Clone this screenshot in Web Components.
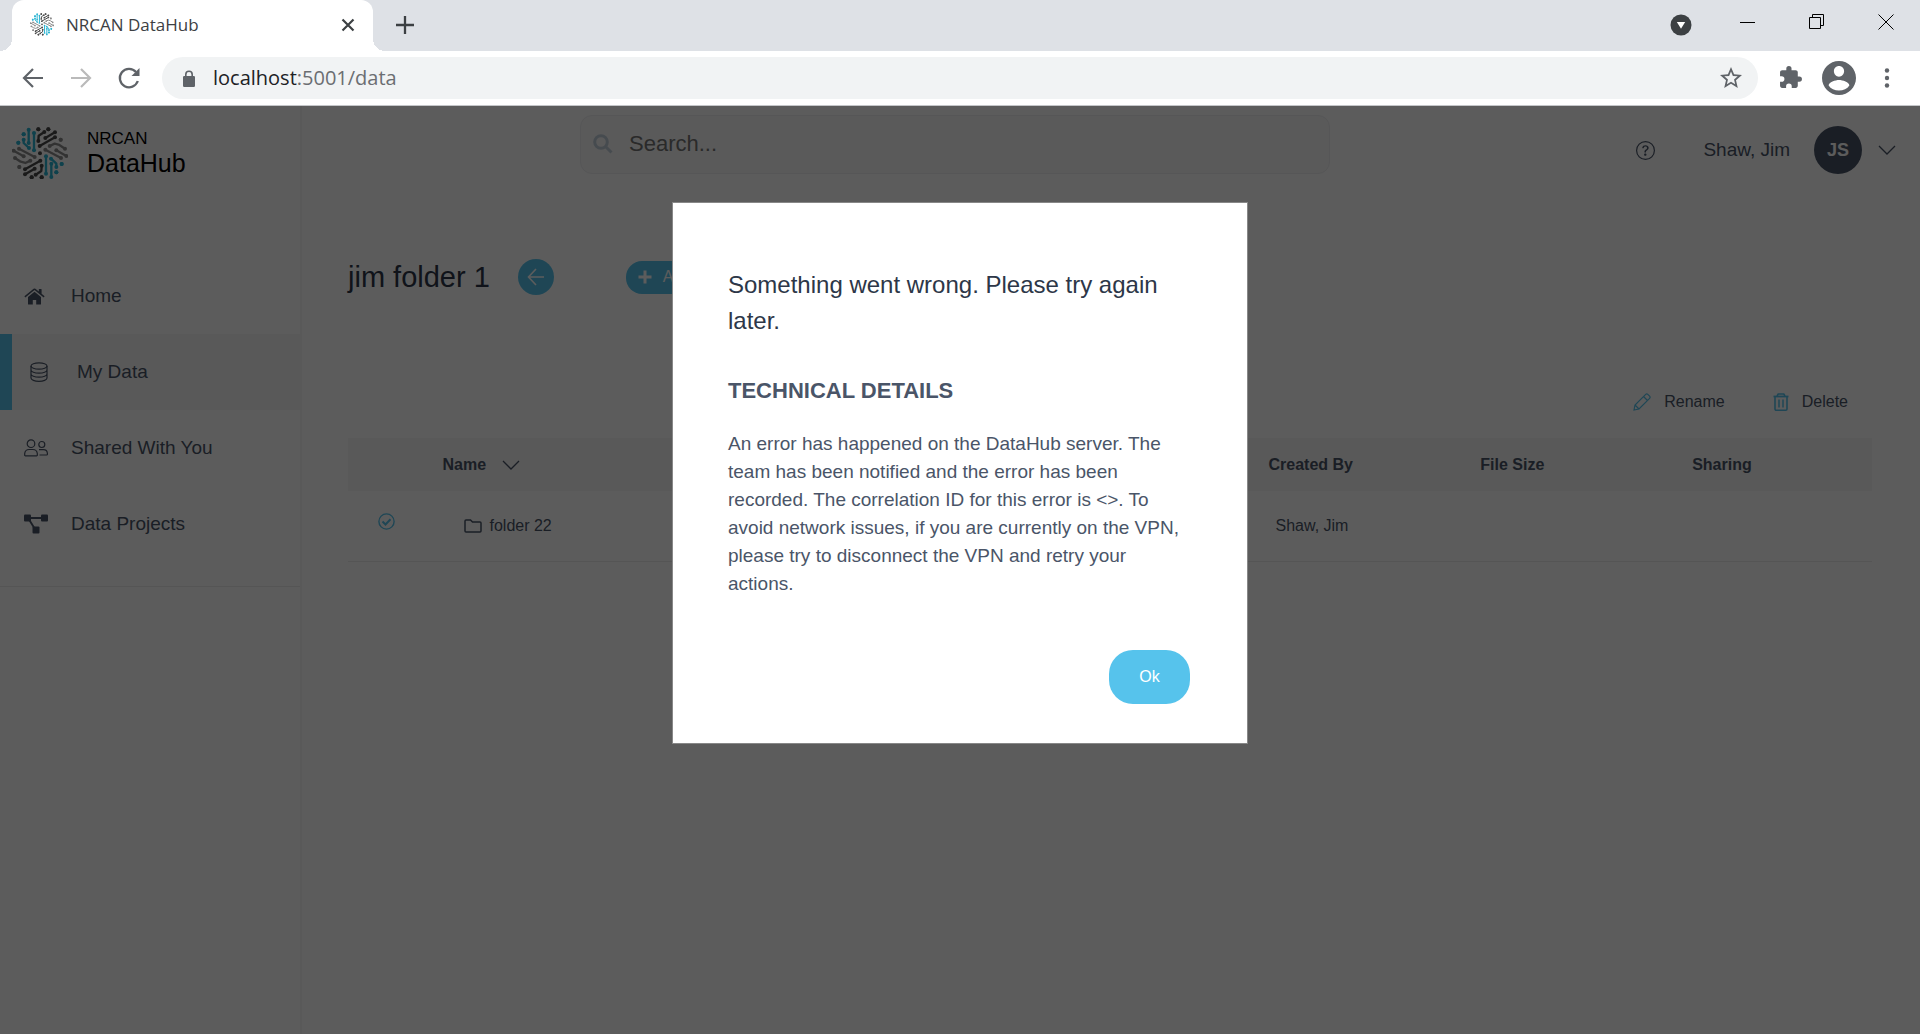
<!DOCTYPE html>
<html lang="en">
<head>
<meta charset="utf-8">
<title>NRCAN DataHub</title>
<style>
html, body { margin: 0; height: 100%; }
body { font-family: "Liberation Sans", Arial, sans-serif; background: #fff; }
browser-window { min-height: 100%; }
</style>
</head>
<body>
<browser-window>
  <tab-strip slot="tabs"></tab-strip>
  <tool-bar slot="toolbar"></tool-bar>
  <data-hub>
    <side-bar slot="side">
      <nav-item icon="home">Home</nav-item>
      <nav-item icon="database" active>My Data</nav-item>
      <nav-item icon="people">Shared With You</nav-item>
      <nav-item icon="projects">Data Projects</nav-item>
    </side-bar>
    <top-bar slot="top"></top-bar>
    <folder-view slot="main"></folder-view>
    <error-dialog slot="dialog">
      <span slot="title">Something went wrong. Please try again later.</span>
      <span slot="subtitle">TECHNICAL DETAILS</span>
      An error has happened on the DataHub server. The team has been notified and the error has been recorded. The correlation ID for this error is &lt;&gt;. To avoid network issues, if you are currently on the VPN, please try to disconnect the VPN and retry your actions.
    </error-dialog>
  </data-hub>
</browser-window>

<script>
const BASE = `
  :host, *, *::before { box-sizing: border-box; }
  button { font: inherit; color: inherit; background: none; border: 0; padding: 0; margin: 0; display: flex; align-items: center; justify-content: center; }
  svg { display: block; flex: none; }
  a { color: inherit; text-decoration: none; }
`;

function define(name, css, html) {
  customElements.define(name, class extends HTMLElement {
    constructor() {
      super();
      const body = typeof html === 'function' ? html(this) : html;
      this.attachShadow({ mode: 'open' }).innerHTML = `<style>${BASE}${css}</style>${body}`;
    }
  });
}

const line = (w, h, box, d, sw = 1, extra = '') =>
  `<svg width="${w}" height="${h}" viewBox="${box}" fill="none" stroke="currentColor" stroke-width="${sw}" aria-hidden="true" ${extra}>${d}</svg>`;
const solid = (w, h, box, d) =>
  `<svg width="${w}" height="${h}" viewBox="${box}" fill="currentColor" aria-hidden="true">${d}</svg>`;

const chevron = line(18, 18, '0 0 18 18', '<path d="M1 5l8 8 8-8"/>', 1.3);

const navIcons = {
  home: solid(21, 17, '0 0 21 17', '<path d="M10.500 3.700L4 9v7a.6.6 0 0 0 .6.600h4.200v-4.600h3.400v4.600h4.200a.6.6 0 0 0 .6-.6V9z"/><path d="M10.500.4a1.400 1.400 0 0 1 .9.300L14.800 3.500V1.400a.5.5 0 0 1 .5-.5h1.800a.5.5 0 0 1 .5.500v4.400L20.600 8.300l-.9 1.200-9.200-7.500-9.200 7.500L.4 8.300 9.600.7a1.400 1.400 0 0 1 .9-.3z"/>'),
  database: line(18, 20, '0 0 18 20', '<ellipse cx="9" cy="4" rx="8" ry="3.200"/><path d="M1 4v12c0 1.800 3.600 3.300 8 3.300s8-1.500 8-3.300V4M1 8c0 1.800 3.600 3.200 8 3.200S17 9.800 17 8M1 12c0 1.800 3.600 3.200 8 3.200s8-1.400 8-3.200"/>', 1.2),
  people: line(24, 18, '0 0 24 18', '<circle cx="7" cy="4.700" r="3.800"/><path d="M.7 16.200v-1.700a4.500 4.500 0 0 1 4.500-4h3.600a4.500 4.500 0 0 1 4.500 4v1.700a.7.700 0 0 1-.7.700H1.400a.7.700 0 0 1-.7-.7z"/><circle cx="17.800" cy="5.500" r="3"/><path d="M15 10.600h4.400a4 4 0 0 1 4 3.800v.8a.8.8 0 0 1-.8.800H15.500"/>', 1.2),
  projects: `<svg width="24" height="20" viewBox="0 0 24 20" fill="currentColor" aria-hidden="true"><rect y=".5" width="7" height="7" rx="1"/><rect x="17" y=".5" width="7" height="7" rx="1"/><rect x="8.500" y="12.500" width="7" height="7" rx="1"/><path d="M6 4h12M5 5.500l5 8" stroke="currentColor" stroke-width="1.900"/></svg>`
};

/* The circuit-board emblem: one half is drawn, the other is its half-turn. */
define('hub-logo', `
  :host { display: block; flex: none; width: var(--logo-width, 56px); }
  svg { width: 100%; height: auto; }
  .t { color: #2ab4d2; } .d { color: #4a4a4a; } .g { color: #8c8c8c; }
  path { fill: none; stroke: currentColor; stroke-width: 7; stroke-linejoin: round; }
  circle { fill: currentColor; }
`, () => {
  const groups = [
    ['t', [[84,58],[84,98]], [[100,68],[100,120]], [[69,88],[69,98],[85,113]], [[69,72]], [[53,97]]],
    ['d', [[113,92],[114,76],[131,65]], [[134,83],[163,66]], [[117,107],[163,81]], [[113,57]], [[143,57]]],
    ['g', [[193,115],[176,104],[162,100],[147,107]], [[181,143],[134,118]], [[197,137],[167,120]], [[180,88]]]
  ];
  const half = groups.map(([c, ...ps]) => `<g class="${c}">` + ps.map(p => {
    const ends = [p[0], p[p.length - 1]].map(([x, y]) => `<circle cx="${x}" cy="${y}" r="6"/>`).join('');
    return ends + (p.length > 1 ? `<path d="M${p.map(q => q.join(' ')).join('L')}"/>` : '');
  }).join('') + '</g>').join('');
  return `<svg viewBox="34 50 168 158" aria-hidden="true">${half}<g transform="rotate(180 118 129)">${half}</g><g class="d"><circle cx="118" cy="129" r="6"/></g></svg>`;
});

define('browser-window', `
  :host { display: flex; flex-direction: column; }
  ::slotted(data-hub) { flex: 1; }
`, `<slot name="tabs"></slot><slot name="toolbar"></slot><slot></slot>`);

define('tab-strip', `
  :host { display: flex; align-items: center; height: 51px; background: #dee1e6; color: #3c4043; font-family: "Open Sans", "Noto Sans", sans-serif; font-size: 17px; padding-left: 12px; }
  .tab { position: relative; align-self: stretch; display: flex; align-items: center; width: 361px; background: #fff; border-radius: 12px 12px 0 0; padding: 0 18px 2px; gap: 12px; --logo-width: 24px; }
  .tab::before { content: ""; position: absolute; bottom: 0; left: -12px; right: -12px; height: 12px; background: radial-gradient(circle at 0 0, transparent 12px, #fff 12px) left / 12px 12px no-repeat, radial-gradient(circle at 100% 0, transparent 12px, #fff 12px) right / 12px 12px no-repeat; }
  .tab span { flex: 1; }
  .new { margin-left: 23px; padding-bottom: 2px; }
  .win { margin-left: auto; display: flex; align-items: center; color: #000; }
  .win button { width: 69px; height: 40px; margin-bottom: 8px; }
  .win .menu { width: 65px; margin-bottom: 2px; color: #3c4043; }
`, `
  <div class="tab"><hub-logo></hub-logo><span>NRCAN DataHub</span>
    <button aria-label="Close tab">${line(14, 14, '0 0 14 14', '<path d="M1.500 1.500l11 11M12.500 1.500l-11 11"/>', 2.2)}</button></div>
  <button class="new" aria-label="New tab">${line(18, 18, '0 0 18 18', '<path d="M9 0v18M0 9h18"/>', 2.3)}</button>
  <div class="win">
    <button class="menu" aria-label="Search tabs"><svg width="22" height="22" viewBox="0 0 22 22" aria-hidden="true"><circle cx="11" cy="11" r="10.500" fill="#3c4043"/><path d="M6.800 8h8.400L11 14.800z" fill="#fff"/></svg></button>
    <button aria-label="Minimize">${line(16, 16, '0 0 16 16', '<path d="M0 8.500h15"/>')}</button>
    <button aria-label="Restore">${line(16, 16, '0 0 16 16', '<path d="M.5 3.500h11v11H.5zM3.500 3.500V.5h11v11h-3"/>')}</button>
    <button aria-label="Close">${line(16, 16, '0 0 16 16', '<path d="M.5.5l15 15M15.500.5l-15 15"/>')}</button>
  </div>`);

define('tool-bar', `
  :host { display: flex; align-items: center; height: 55px; padding: 0 21px 0 21px; background: #fff; border-bottom: 1px solid #c4c6c9; color: #5f6368; font-family: "Open Sans", "Noto Sans", sans-serif; }
  .nav { display: flex; gap: 24px; margin-right: 21px; }
  .off { color: #bababa; }
  .url { flex: 1; display: flex; align-items: center; height: 42px; border-radius: 21px; background: #f1f3f4; padding: 0 16px 0 21px; gap: 18px; font-size: 20px; line-height: 24px; }
  .url span { flex: 1; color: #6b6e72; }
  b { font-weight: 400; color: #202124; }
  .right { display: flex; align-items: center; gap: 19px; margin-left: 21px; }
`, `
  <div class="nav">
    <button aria-label="Back">${line(24, 24, '0 0 24 24', '<path d="M22 12H3M12 3l-9 9 9 9"/>', 2.2)}</button>
    <button class="off" aria-label="Forward">${line(24, 24, '0 0 24 24', '<path d="M2 12h19M12 3l9 9-9 9"/>', 2.2)}</button>
    <button aria-label="Reload">${line(24, 24, '0 0 24 24', '<path d="M20.800 15A9.200 9.200 0 1 1 19 6"/><path d="M22.500 2v8h-8z" fill="currentColor" stroke="none"/>', 2.300)}</button>
  </div>
  <div class="url">
    ${solid(12, 17, '0 0 12 17', '<path d="M10.800 6H10V4.500a4 4 0 0 0-8 0V6h-.8A1.200 1.200 0 0 0 0 7.200v8.600A1.200 1.200 0 0 0 1.200 17h9.600a1.200 1.200 0 0 0 1.200-1.200V7.200A1.200 1.200 0 0 0 10.800 6zM3.600 6V4.500a2.400 2.400 0 0 1 4.800 0V6z"/>')}
    <span><b>localhost</b>:5001/data</span>
    <button aria-label="Bookmark this tab">${solid(22, 22, '2 2 20 20', '<path d="M22 9.240l-7.190-.62L12 2 9.190 8.630 2 9.240l5.460 4.730L5.820 21 12 17.270 18.180 21l-1.630-7.030L22 9.240zM12 15.400l-3.760 2.270 1-4.280-3.320-2.880 4.380-.38L12 6.100l1.710 4.040 4.380.38-3.320 2.880 1 4.280L12 15.400z"/>')}</button>
  </div>
  <div class="right">
    <button aria-label="Extensions">${solid(24, 24, '1 1 23 23', '<path d="M20.500 11H19V7c0-1.100-.9-2-2-2h-4V3.500a2.500 2.500 0 0 0-5 0V5H4c-1.100 0-2 .9-2 2v3.800h1.500a2.700 2.700 0 0 1 0 5.400H2V20c0 1.100.9 2 2 2h3.800v-1.500a2.700 2.700 0 0 1 5.400 0V22H17c1.100 0 2-.9 2-2v-4h1.500a2.500 2.500 0 0 0 0-5z"/>')}</button>
    <button aria-label="Profile">${solid(34, 34, '2 2 20 20', '<path d="M12 2C6.480 2 2 6.480 2 12s4.480 10 10 10 10-4.480 10-10S17.520 2 12 2zm0 3c1.660 0 3 1.340 3 3s-1.340 3.200-3 3.200S9 9.660 9 8s1.340-3 3-3zm0 14.400c-2.500 0-4.900-1.080-6.100-2.950.03-1.990 4-3.280 6.100-3.280s6.070 1.290 6.100 3.280C16.900 18.320 14.500 19.400 12 19.400z"/>')}</button>
    <button aria-label="Menu">${solid(24, 20, '0 0 24 20', '<circle cx="12" cy="2.500" r="2.200"/><circle cx="12" cy="10" r="2.200"/><circle cx="12" cy="17.500" r="2.200"/>')}</button>
  </div>`);

define('data-hub', `
  :host { display: flex; position: relative; background: #fff; color: #4a5568; }
  .content { flex: 1; display: flex; flex-direction: column; min-width: 0; }
`, `<slot name="side"></slot><div class="content"><slot name="top"></slot><slot name="main"></slot></div><slot name="dialog"></slot>`);

define('side-bar', `
  :host { display: block; flex: none; width: 302px; border-right: 2px solid #f7f7f7; }
  .brand { display: flex; align-items: center; gap: 19px; height: 94px; padding-left: 12px; color: #000; }
  .brand div { display: grid; font-size: 25px; line-height: 28px; }
  small { font-size: 17px; line-height: 20px; }
  nav { display: block; margin-top: 58px; padding-bottom: 24px; border-bottom: 1px solid #ececec; }
`, `
  <a class="brand" href="#"><hub-logo></hub-logo><div><small>NRCAN</small><span>DataHub</span></div></a>
  <nav><slot></slot></nav>`);

define('nav-item', `
  :host { display: block; font-size: 19px; }
  a { display: flex; align-items: center; gap: 23px; height: 76px; padding-left: 24px; }
  i { display: flex; width: 24px; }
  :host([active]) a { padding-left: 18px; border-left: 12px solid #56c3ec; background: #f7f7f7; }
`, el => `<a href="#"><i>${navIcons[el.getAttribute('icon')]}</i><slot></slot></a>`);

define('top-bar', `
  :host { display: flex; align-items: flex-start; justify-content: space-between; padding: 9px 24px 0 278px; }
  .search { flex: 0 1 750px; display: flex; align-items: center; gap: 16px; height: 59px; padding: 0 12px 2px; border: 1px solid #edeef0; border-radius: 12px; background: #f9f9f9; color: #c3cfdc; }
  input { flex: 1; min-width: 0; font: inherit; font-size: 22px; border: 0; padding: 0; background: none; outline: 0; }
  input::placeholder { color: #757575; opacity: 1; }
  .user { display: flex; align-items: center; gap: 16px; padding-top: 11px; font-size: 19px; }
  .user span { margin-left: 32px; margin-right: 8px; }
  .avatar { width: 48px; height: 48px; border-radius: 24px; background: #4a5568; color: #fff; font-size: 18px; font-weight: 700; display: flex; align-items: center; justify-content: center; }
`, `
  <label class="search">${line(20, 20, '0 0 20 20', '<circle cx="8" cy="8" r="6.300"/><path d="M12.500 12.500l6 6"/>', 3)}
    <input type="search" placeholder="Search..." aria-label="Search"></label>
  <div class="user">
    <button aria-label="Help"><svg width="19" height="19" viewBox="0 0 16 16" fill="currentColor" aria-hidden="true"><path d="M8 15A7 7 0 1 1 8 1a7 7 0 0 1 0 14zm0 1A8 8 0 1 0 8 0a8 8 0 0 0 0 16z"/><path d="M5.255 5.786a.237.237 0 0 0 .241.247h.825c.138 0 .248-.113.266-.25.09-.656.540-1.134 1.342-1.134.686 0 1.314.343 1.314 1.168 0 .635-.374.927-.965 1.371-.673.489-1.206 1.060-1.168 1.987l.003.217a.25.25 0 0 0 .25.246h.811a.25.25 0 0 0 .25-.25v-.105c0-.718.273-.927 1.010-1.486.609-.463 1.244-.977 1.244-2.056 0-1.511-1.276-2.241-2.673-2.241-1.267 0-2.655.590-2.750 2.286zm1.557 5.763c0 .533.425.927 1.010.927.609 0 1.028-.394 1.028-.927 0-.552-.420-.940-1.029-.940-.584 0-1.009.388-1.009.940z"/></svg></button>
    <span>Shaw, Jim</span>
    <div class="avatar">JS</div>
    <button aria-label="Account menu">${chevron}</button>
  </div>`);

define('folder-view', `
  :host { display: block; padding: 85px 48px 0 46px; font-size: 16px; }
  header { display: flex; align-items: center; height: 36px; }
  h1 { margin: 0 28px 0 0; font-size: 29px; font-weight: 400; line-height: 36px; color: #2d3748; }
  .back { width: 36px; height: 36px; border-radius: 18px; background: #56c3ec; color: #fff; }
  .add { height: 33px; margin-left: 72px; padding: 0 24px 0 12px; gap: 11px; border-radius: 16px; background: #56c3ec; color: #fff; }
  .actions { display: flex; justify-content: flex-end; gap: 48px; margin-top: 95px; padding-right: 24px; height: 24px; }
  .actions button { gap: 13px; }
  .actions svg { color: #56c3ec; }
  table { width: 100%; margin-top: 24px; table-layout: fixed; border-collapse: collapse; text-align: left; }
  th, td { padding: 0; }
  th { height: 53px; background: #f5f5f5; }
  td { height: 70px; border-bottom: 1px solid #ececec; padding: 0 7px; }
  .pick { padding: 0 0 8px 30px; color: #56c3ec; }
  .pick label { display: flex; }
  input { appearance: none; width: 0; height: 0; margin: 0; }
  .sort { gap: 16px; font-weight: 700; }
  .name { padding-left: 22px; }
  .name a { display: flex; align-items: center; gap: 7px; }
`, `
  <header><h1>jim folder 1</h1>
    <button class="back" aria-label="Go back">${line(18, 18, '0 0 18 18', '<path d="M17 9H2M9 1L1.500 9 9 17"/>', 1.6)}</button>
    <button class="add">${line(14, 14, '0 0 14 14', '<path d="M7 .5v13M.5 7h13"/>', 3)}Add</button>
  </header>
  <div class="actions">
    <button>${line(18, 18, '0 0 18 18', '<path d="M1 17l1-5L12.700 1.400a1.500 1.500 0 0 1 2.100 0l1.800 1.800a1.500 1.500 0 0 1 0 2.100L6 16zM10.500 3.500l4 4M2 12l4 4"/>', 1.2)}Rename</button>
    <button>${line(16, 18, '0 0 16 18', '<path d="M.5 3.500h15" stroke-width="1.800"/><path d="M4 3l1.200-2h5.600L12 3M2 4v12a1.200 1.200 0 0 0 1.200 1.200h9.600A1.200 1.200 0 0 0 14 16V4" stroke-width="1.600"/><path d="M6 6.500v8M10 6.500v8"/>', 1.5)}Delete</button>
  </div>
  <table>
    <colgroup><col style="width:6.200%"><col style="width:54.200%"><col style="width:13.900%"><col style="width:13.900%"><col></colgroup>
    <thead><tr><th></th><th><button class="sort">Name ${chevron}</button></th><th>Created By</th><th>File Size</th><th>Sharing</th></tr></thead>
    <tbody><tr>
      <td class="pick"><label><input type="checkbox" checked aria-label="Select folder 22">${line(17, 17, '0 0 17 17', '<circle cx="8.500" cy="8.500" r="7.600"/><path d="M4.500 8.500l3 3 5-5.300" stroke-width="2"/>', 1.4)}</label></td>
      <td class="name"><a href="#">${line(18, 14, '0 0 18 14', '<path d="M1 12V2a1 1 0 0 1 1-1h4.500l2 2H16a1 1 0 0 1 1 1v8a1 1 0 0 1-1 1H2a1 1 0 0 1-1-1z"/>', 1.5)}folder 22</a></td>
      <td>Shaw, Jim</td><td></td><td></td>
    </tr></tbody>
  </table>`);

define('error-dialog', `
  :host { position: absolute; inset: 0; display: flex; justify-content: center; align-items: flex-start; padding-top: 96px; background: rgba(0, 0, 0, .64); }
  section { width: 576px; max-width: 100%; padding: 64px 57px 39px 55px; background: #fff; border: 1px solid #888; color: #4a5568; }
  h2 { margin: 0; font-size: 24px; line-height: 36px; font-weight: 400; color: #2d3748; }
  h3 { margin: 36px 0 0; font-size: 22px; line-height: 32px; }
  p { margin: 23px 0 0; font-size: 19px; line-height: 28px; }
  button { margin: 52px 0 0 auto; width: 81px; height: 54px; border-radius: 24px; background: #56c3ec; color: #fff; font-size: 16px; }
`, `
  <section role="dialog" aria-modal="true" aria-labelledby="t">
    <h2 id="t"><slot name="title"></slot></h2>
    <h3><slot name="subtitle"></slot></h3>
    <p><slot></slot></p>
    <button>Ok</button>
  </section>`);
</script>
</body>
</html>
